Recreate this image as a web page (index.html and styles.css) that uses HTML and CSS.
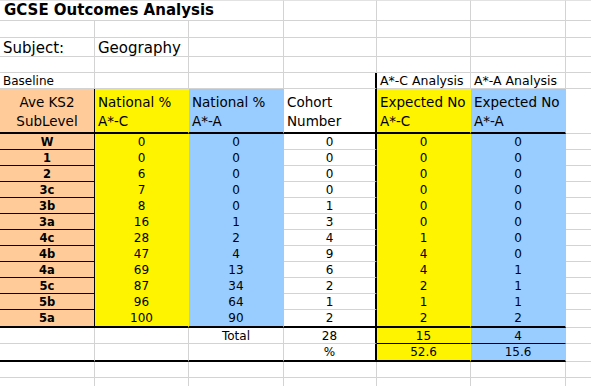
FILE: index.html
```html
<!DOCTYPE html>
<html lang="en">
<head>
<meta charset="utf-8">
<title>GCSE Outcomes Analysis</title>
<link rel="stylesheet" href="styles.css">
</head>
<body>
<div class="sheet">
  <!-- row 1 -->
  <div class="c top title span3">GCSE Outcomes Analysis</div>
  <div class="c top"></div><div class="c top"></div><div class="c top"></div><div class="c top"></div>
  <!-- row 2 -->
  <div class="c"></div><div class="c"></div><div class="c"></div><div class="c"></div><div class="c"></div><div class="c"></div><div class="c"></div>
  <!-- row 3 -->
  <div class="c big">Subject:</div><div class="c big">Geography</div><div class="c"></div><div class="c"></div><div class="c"></div><div class="c"></div><div class="c"></div>
  <!-- row 4 -->
  <div class="c"></div><div class="c"></div><div class="c"></div><div class="c"></div><div class="c"></div><div class="c"></div><div class="c"></div>
  <!-- row 5 -->
  <div class="c small">Baseline</div><div class="c"></div><div class="c"></div><div class="c rb2"></div><div class="c ana">A*-C Analysis</div><div class="c ana">A*-A Analysis</div><div class="c"></div>
  <!-- header row -->
  <div class="c hdr pe ctr bb2"><span>Ave KS2</span><span>SubLevel</span></div>
  <div class="c hdr ye bb2"><span>National %</span><span>A*-C</span></div>
  <div class="c hdr bl bb2"><span>National %</span><span>A*-A</span></div>
  <div class="c hdr rb2 bb2"><span>Cohort</span><span>Number</span></div>
  <div class="c hdr ye bb2"><span>Expected No</span><span>A*-C</span></div>
  <div class="c hdr bl bb2"><span>Expected No</span><span>A*-A</span></div>
  <div class="c"></div>
  <!-- data rows -->
  <div class="c pe lab">W</div><div class="c ye num">0</div><div class="c bl num">0</div><div class="c rb2 num">0</div><div class="c ye num">0</div><div class="c bl num">0</div><div class="c"></div>
  <div class="c pe lab">1</div><div class="c ye num">0</div><div class="c bl num">0</div><div class="c rb2 num">0</div><div class="c ye num">0</div><div class="c bl num">0</div><div class="c"></div>
  <div class="c pe lab">2</div><div class="c ye num">6</div><div class="c bl num">0</div><div class="c rb2 num">0</div><div class="c ye num">0</div><div class="c bl num">0</div><div class="c"></div>
  <div class="c pe lab">3c</div><div class="c ye num">7</div><div class="c bl num">0</div><div class="c rb2 num">0</div><div class="c ye num">0</div><div class="c bl num">0</div><div class="c"></div>
  <div class="c pe lab">3b</div><div class="c ye num">8</div><div class="c bl num">0</div><div class="c rb2 num">1</div><div class="c ye num">0</div><div class="c bl num">0</div><div class="c"></div>
  <div class="c pe lab">3a</div><div class="c ye num">16</div><div class="c bl num">1</div><div class="c rb2 num">3</div><div class="c ye num">0</div><div class="c bl num">0</div><div class="c"></div>
  <div class="c pe lab">4c</div><div class="c ye num">28</div><div class="c bl num">2</div><div class="c rb2 num">4</div><div class="c ye num">1</div><div class="c bl num">0</div><div class="c"></div>
  <div class="c pe lab">4b</div><div class="c ye num">47</div><div class="c bl num">4</div><div class="c rb2 num">9</div><div class="c ye num">4</div><div class="c bl num">0</div><div class="c"></div>
  <div class="c pe lab">4a</div><div class="c ye num">69</div><div class="c bl num">13</div><div class="c rb2 num">6</div><div class="c ye num">4</div><div class="c bl num">1</div><div class="c"></div>
  <div class="c pe lab">5c</div><div class="c ye num">87</div><div class="c bl num">34</div><div class="c rb2 num">2</div><div class="c ye num">2</div><div class="c bl num">1</div><div class="c"></div>
  <div class="c pe lab">5b</div><div class="c ye num">96</div><div class="c bl num">64</div><div class="c rb2 num">1</div><div class="c ye num">1</div><div class="c bl num">1</div><div class="c"></div>
  <div class="c pe lab bb2">5a</div><div class="c ye num bb2">100</div><div class="c bl num bb2">90</div><div class="c rb2 num bb2">2</div><div class="c ye num bb2">2</div><div class="c bl num bb2">2</div><div class="c"></div>
  <!-- total row -->
  <div class="c"></div><div class="c"></div><div class="c num">Total</div><div class="c rb2 num">28</div><div class="c ye num bb1">15</div><div class="c bl num bb1">4</div><div class="c"></div>
  <!-- percent row -->
  <div class="c bb2"></div><div class="c bb2"></div><div class="c bb2"></div><div class="c rb2 num bb2">%</div><div class="c ye num bb2">52.6</div><div class="c bl num bb2">15.6</div><div class="c"></div>
  <!-- trailing rows -->
  <div class="c"></div><div class="c"></div><div class="c"></div><div class="c"></div><div class="c"></div><div class="c"></div><div class="c"></div>
  <div class="c"></div><div class="c"></div><div class="c"></div><div class="c"></div><div class="c"></div><div class="c"></div><div class="c"></div>
</div>
</body>
</html>
```

FILE: styles.css
```css
html, body {
  margin: 0;
  padding: 0;
  background: #ffffff;
}

body {
  width: 591px;
  height: 386px;
  overflow: hidden;
  font-family: "DejaVu Sans", Verdana, sans-serif;
  color: #000;
}

.sheet {
  display: grid;
  grid-template-columns: 95px 94px 95px 93px 94px 95px 40px;
  grid-template-rows: 21px 17px 19px 16px 16px 45px repeat(11, 16px) 18px 16px 18px 16px 16px;
}

.c {
  box-sizing: border-box;
  border-right: 1px solid #d3d3d3;
  border-bottom: 1px solid #d3d3d3;
  font-size: 12px;
  line-height: 14px;
  padding-left: 3px;
  white-space: nowrap;
  overflow: hidden;
  display: flex;
  align-items: center;
}

.top {
  border-top: 1px solid #e2e2e2;
}

.span3 {
  grid-column: span 3;
}

.title {
  font-size: 15px;
  font-weight: bold;
  padding-left: 4px;
  line-height: 19px;
}

.big {
  font-size: 15px;
  line-height: 18px;
  padding-top: 1px;
}

.small {
  font-size: 12px;
}

.ana {
  font-size: 12.5px;
}

.hdr {
  flex-direction: column;
  align-items: flex-start;
  justify-content: flex-end;
  font-size: 13.5px;
  line-height: 19px;
  padding-bottom: 1px;
}

.hdr.ctr {
  align-items: center;
  padding-left: 0;
}

.num {
  justify-content: center;
  padding-left: 0;
  font-size: 12px;
}

.lab {
  justify-content: center;
  padding-left: 0;
  font-size: 11.5px;
  font-weight: bold;
}

.pe {
  background: #ffcc99;
  border-right-color: #000;
  border-bottom-color: #000;
}

.ye {
  background: #fff400;
  border-right-color: transparent;
  border-bottom-color: transparent;
}

.bl {
  background: #99ccff;
  border-right-color: transparent;
  border-bottom-color: transparent;
}

.rb2 {
  border-right: 2px solid #000;
}

.bb1 {
  border-bottom: 1px solid #000;
}

.bb2 {
  border-bottom: 2px solid #000;
}
```
